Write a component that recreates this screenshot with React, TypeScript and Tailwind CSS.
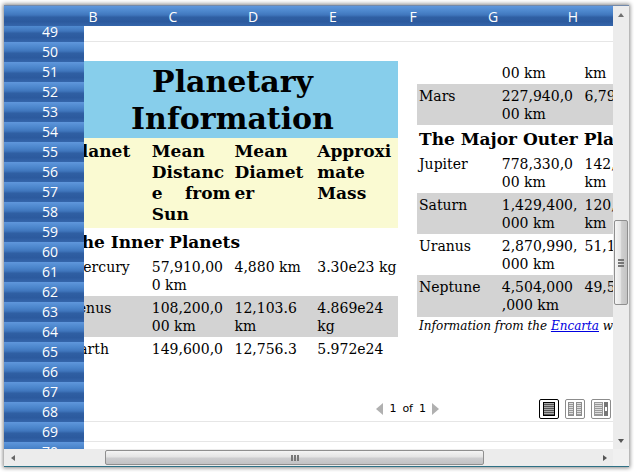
import type { ReactNode } from "react";

const blueFill =
  "bg-[linear-gradient(to_bottom,#5f97dc_0%,#4b85cb_28%,#4076bd_45%,#2f5fa3_56%,#2c5a9e_78%,#3566ab_100%)]";

const columns = ["B", "C", "D", "E", "F", "G", "H"];
const rows = Array.from({ length: 22 }, (_, i) => 49 + i);

function Cell({ lines = [] }: { lines?: string[] }) {
  return (
    <td className="px-[2px] pt-[3px] pb-0 align-top">
      {lines.map((line) => (
        <span key={line} className="block whitespace-nowrap">
          {line}
        </span>
      ))}
    </td>
  );
}

function PlanetRow({ name, cells, shaded, height = "h-[41px]" }: { name: string; cells: string[][]; shaded?: boolean; height?: string }) {
  return (
    <tr className={`${height} ${shaded ? "bg-[#d3d3d3]" : ""}`}>
      <th scope="row" className="px-[2px] pt-[3px] pb-0 text-left align-top font-normal">
        {name}
      </th>
      {cells.map((lines, i) => (
        <Cell key={i} lines={lines} />
      ))}
    </tr>
  );
}

function SectionRow({ children }: { children: ReactNode }) {
  return (
    <tr className="h-[27px]">
      <th colSpan={4} className="px-[2px] py-0 text-left align-middle text-[17px] leading-[26px] font-bold whitespace-nowrap">
        {children}
      </th>
    </tr>
  );
}

function HeadCell({ children }: { children: ReactNode }) {
  return (
    <th scope="col" className="px-[2px] pt-[3px] pb-0 text-left align-top text-[17px] leading-[21px] font-bold whitespace-nowrap">
      {children}
    </th>
  );
}

function InnerPlanets() {
  return (
    <table className="w-[331px] shrink-0 table-fixed border-collapse text-[14px] leading-[18px]">
      <thead>
        <tr className="h-[77px] bg-[#87ceeb]">
          <th colSpan={4} className="p-0 text-center text-[30px] leading-[37px] font-bold">
            <span className="block">Planetary</span>
            <span className="block">Information</span>
          </th>
        </tr>
        <tr className="h-[90px] bg-[#fafad2]">
          <HeadCell>Planet</HeadCell>
          <HeadCell>
            <span className="block">Mean</span>
            <span className="block">Distanc</span>
            <span className="flex justify-between">
              <span>e</span>
              <span>from</span>
            </span>
            <span className="block">Sun</span>
          </HeadCell>
          <HeadCell>
            <span className="block">Mean</span>
            <span className="block">Diamet</span>
            <span className="block">er</span>
          </HeadCell>
          <HeadCell>
            <span className="block">Approxi</span>
            <span className="block">mate</span>
            <span className="block">Mass</span>
          </HeadCell>
        </tr>
      </thead>
      <tbody>
        <SectionRow>The Inner Planets</SectionRow>
        <PlanetRow name="Mercury" cells={[["57,910,00", "0 km"], ["4,880 km"], ["3.30e23 kg"]]} />
        <PlanetRow name="Venus" shaded cells={[["108,200,0", "00 km"], ["12,103.6", "km"], ["4.869e24", "kg"]]} />
        <PlanetRow name="Earth" cells={[["149,600,0"], ["12,756.3"], ["5.972e24"]]} />
      </tbody>
    </table>
  );
}

function OuterPlanets() {
  return (
    <div className="w-[331px] shrink-0">
      <table className="w-full table-fixed border-collapse text-[14px] leading-[18px]">
        <tbody>
          <PlanetRow name="" height="h-[23px]" cells={[["00 km"], ["km"], []]} />
          <PlanetRow name="Mars" shaded cells={[["227,940,0", "00 km"], ["6,794 km"], []]} />
          <SectionRow>The Major Outer Planets</SectionRow>
          <PlanetRow name="Jupiter" cells={[["778,330,0", "00 km"], ["142,984", "km"], []]} />
          <PlanetRow name="Saturn" shaded cells={[["1,429,400,", "000 km"], ["120,536", "km"], []]} />
          <PlanetRow name="Uranus" cells={[["2,870,990,", "000 km"], ["51,118 km"], []]} />
          <PlanetRow name="Neptune" shaded height="h-[42px]" cells={[["4,504,000", ",000 km"], ["49,532 km"], []]} />
        </tbody>
      </table>
      <p className="px-[2px] text-[12px] leading-[18px] whitespace-nowrap italic">
        Information from the{" "}
        <a href="#encarta" className="text-[#0000e0] underline">
          Encarta
        </a>{" "}
        web site.
      </p>
    </div>
  );
}

function Lines({ x, width, color }: { x: number; width: number; color: string }) {
  return (
    <>
      {[5, 7, 9, 11, 13, 15].map((y) => (
        <rect key={y} x={x} y={y} width={width} height="1" fill={color} />
      ))}
    </>
  );
}

function ViewButton({ label, active, children }: { label: string; active?: boolean; children: ReactNode }) {
  return (
    <button type="button" aria-label={label} className={`size-5 shrink-0 rounded-[2px] border bg-white ${active ? "border-black" : "border-[#8c8c8c]"}`}>
      <svg viewBox="1 1 18 18" className="block size-[18px]" shapeRendering="crispEdges">
        {children}
      </svg>
    </button>
  );
}

function PagerBar() {
  return (
    <div className="flex h-6 shrink-0 items-center">
      <div className="flex min-w-0 flex-1 items-center justify-end gap-[6px] font-['DejaVu_Sans',sans-serif] text-[11px] leading-5">
        <button type="button" aria-label="Previous page">
          <svg viewBox="0 0 7 12" className="block h-3 w-[7px]">
            <path d="M7 0v12L0 6z" fill="#b0b0b0" />
          </svg>
        </button>
        <span>1</span>
        <span>of</span>
        <span>1</span>
        <button type="button" aria-label="Next page">
          <svg viewBox="0 0 7 12" className="block h-3 w-[7px]">
            <path d="M0 0v12l7-6z" fill="#b0b0b0" />
          </svg>
        </button>
      </div>
      <div className="ml-[100px] flex gap-[6px] pr-[2px]">
        <ViewButton label="Single page" active>
          <rect x="4" y="3" width="12" height="14" fill="#000" />
          <rect x="5" y="4" width="10" height="12" fill="#aaa" />
          <Lines x={5} width={10} color="#555" />
        </ViewButton>
        <ViewButton label="Two pages">
          <rect x="3" y="3" width="6" height="14" fill="#8c8c8c" />
          <rect x="4" y="4" width="4" height="12" fill="#ddd" />
          <Lines x={4} width={4} color="#999" />
          <rect x="11" y="3" width="6" height="14" fill="#8c8c8c" />
          <rect x="12" y="4" width="4" height="12" fill="#ddd" />
          <Lines x={12} width={4} color="#999" />
        </ViewButton>
        <ViewButton label="Scroll view">
          <rect x="3" y="3" width="9" height="14" fill="#999" />
          <rect x="4" y="4" width="7" height="12" fill="#ddd" />
          <Lines x={4} width={7} color="#999" />
          <rect x="13" y="3" width="4" height="14" fill="#777" />
          <rect x="14" y="8" width="2" height="4" fill="#fff" />
        </ViewButton>
      </div>
    </div>
  );
}

function ColumnHeaders() {
  return (
    <div className={`flex h-5 shrink-0 overflow-hidden pl-[49px] text-white ${blueFill}`}>
      {columns.map((c) => (
        <div key={c} className="w-20 shrink-0 pt-px text-center leading-5">
          {c}
        </div>
      ))}
    </div>
  );
}

function RowHeaders() {
  return (
    <div className="w-20 shrink-0 overflow-hidden text-white">
      <div className="-mt-1">
        {rows.map((r) => (
          <div key={r} className={`h-5 pl-3 text-center leading-5 ${blueFill}`}>
            {r}
          </div>
        ))}
      </div>
    </div>
  );
}

function VerticalScrollbar() {
  return (
    <div className="flex w-4 shrink-0 flex-col items-center bg-[#ececec]">
      <button type="button" aria-label="Scroll up" className="flex h-[17px] w-full items-center justify-center">
        <svg viewBox="0 0 6 4" className="h-1 w-[6px]">
          <path d="M3 0l3 4H0z" fill="#707070" />
        </svg>
      </button>
      <div className="flex w-full flex-1 flex-col px-px">
        <div className="flex-[197]" />
        <div className="flex h-[85px] items-center justify-center rounded-[2px] border border-[#8f8f8f] bg-[linear-gradient(to_right,#f6f6f6,#e6e6e6_45%,#cfcfcf_55%,#c4c4c4)]">
          <div className="flex w-[6px] flex-col gap-px">
            <span className="h-[2px] bg-[#777]" />
            <span className="h-[2px] bg-[#777]" />
            <span className="h-[2px] bg-[#777]" />
          </div>
        </div>
        <div className="flex-[127]" />
      </div>
      <button type="button" aria-label="Scroll down" className="flex h-[17px] w-full items-center justify-center">
        <svg viewBox="0 0 6 4" className="h-1 w-[6px]">
          <path d="M0 0h6L3 4z" fill="#555" />
        </svg>
      </button>
    </div>
  );
}

function HorizontalScrollbar() {
  return (
    <div className="flex h-[17px] shrink-0 bg-[#f0f0f0]">
      <div className="flex min-w-0 flex-1 bg-[#ececec] py-px">
        <button type="button" aria-label="Scroll left" className="flex w-[17px] items-center justify-center">
          <svg viewBox="0 0 4 6" className="h-[6px] w-1">
            <path d="M4 0v6L0 3z" fill="#666" />
          </svg>
        </button>
        <div className="flex flex-1">
          <div className="flex-[84]" />
          <div className="flex w-[379px] items-center justify-center gap-px rounded-[2px] border border-[#8f8f8f] bg-[linear-gradient(to_bottom,#f4f4f4,#e4e4e4_45%,#cdcdcf_55%,#c2c2c4)]">
            <span className="h-[6px] w-[2px] bg-[#777]" />
            <span className="h-[6px] w-[2px] bg-[#777]" />
            <span className="h-[6px] w-[2px] bg-[#777]" />
          </div>
          <div className="flex-[112]" />
        </div>
        <button type="button" aria-label="Scroll right" className="flex w-[17px] items-center justify-center">
          <svg viewBox="0 0 4 6" className="h-[6px] w-1">
            <path d="M0 0l4 3-4 3z" fill="#555" />
          </svg>
        </button>
      </div>
      <div className="w-4 shrink-0" />
    </div>
  );
}

export default function App() {
  return (
    <div className="h-screen overflow-hidden bg-white pt-[5px] pr-[5px] pb-[5px] pl-1 font-['Open_Sans',sans-serif] text-[14px]">
      <div className="flex h-full flex-col border-t border-b border-t-[#7289ab] border-b-[#2e7186] bg-white shadow-[0_0_4px_1px_#888]">
        <div className="flex min-h-0 flex-1">
          <div className="flex min-w-0 flex-1 flex-col">
            <ColumnHeaders />
            <div className="flex min-h-0 flex-1">
              <RowHeaders />
              <main className="flex min-w-0 flex-1 flex-col overflow-hidden">
                <div className="h-4 shrink-0 border-b border-[#e6e6e6]" />
                <div className="flex h-[380px] shrink-0 flex-col border-b border-[#e6e6e6] pt-[19px]">
                  <div className="-ml-[17px] flex min-h-0 flex-1 items-start gap-[19px] overflow-hidden font-['DejaVu_Serif',serif] text-black">
                    <InnerPlanets />
                    <OuterPlanets />
                  </div>
                  <PagerBar />
                </div>
                <div className="h-5 shrink-0 border-b border-[#e6e6e6]" />
              </main>
            </div>
          </div>
          <VerticalScrollbar />
        </div>
        <HorizontalScrollbar />
      </div>
    </div>
  );
}
